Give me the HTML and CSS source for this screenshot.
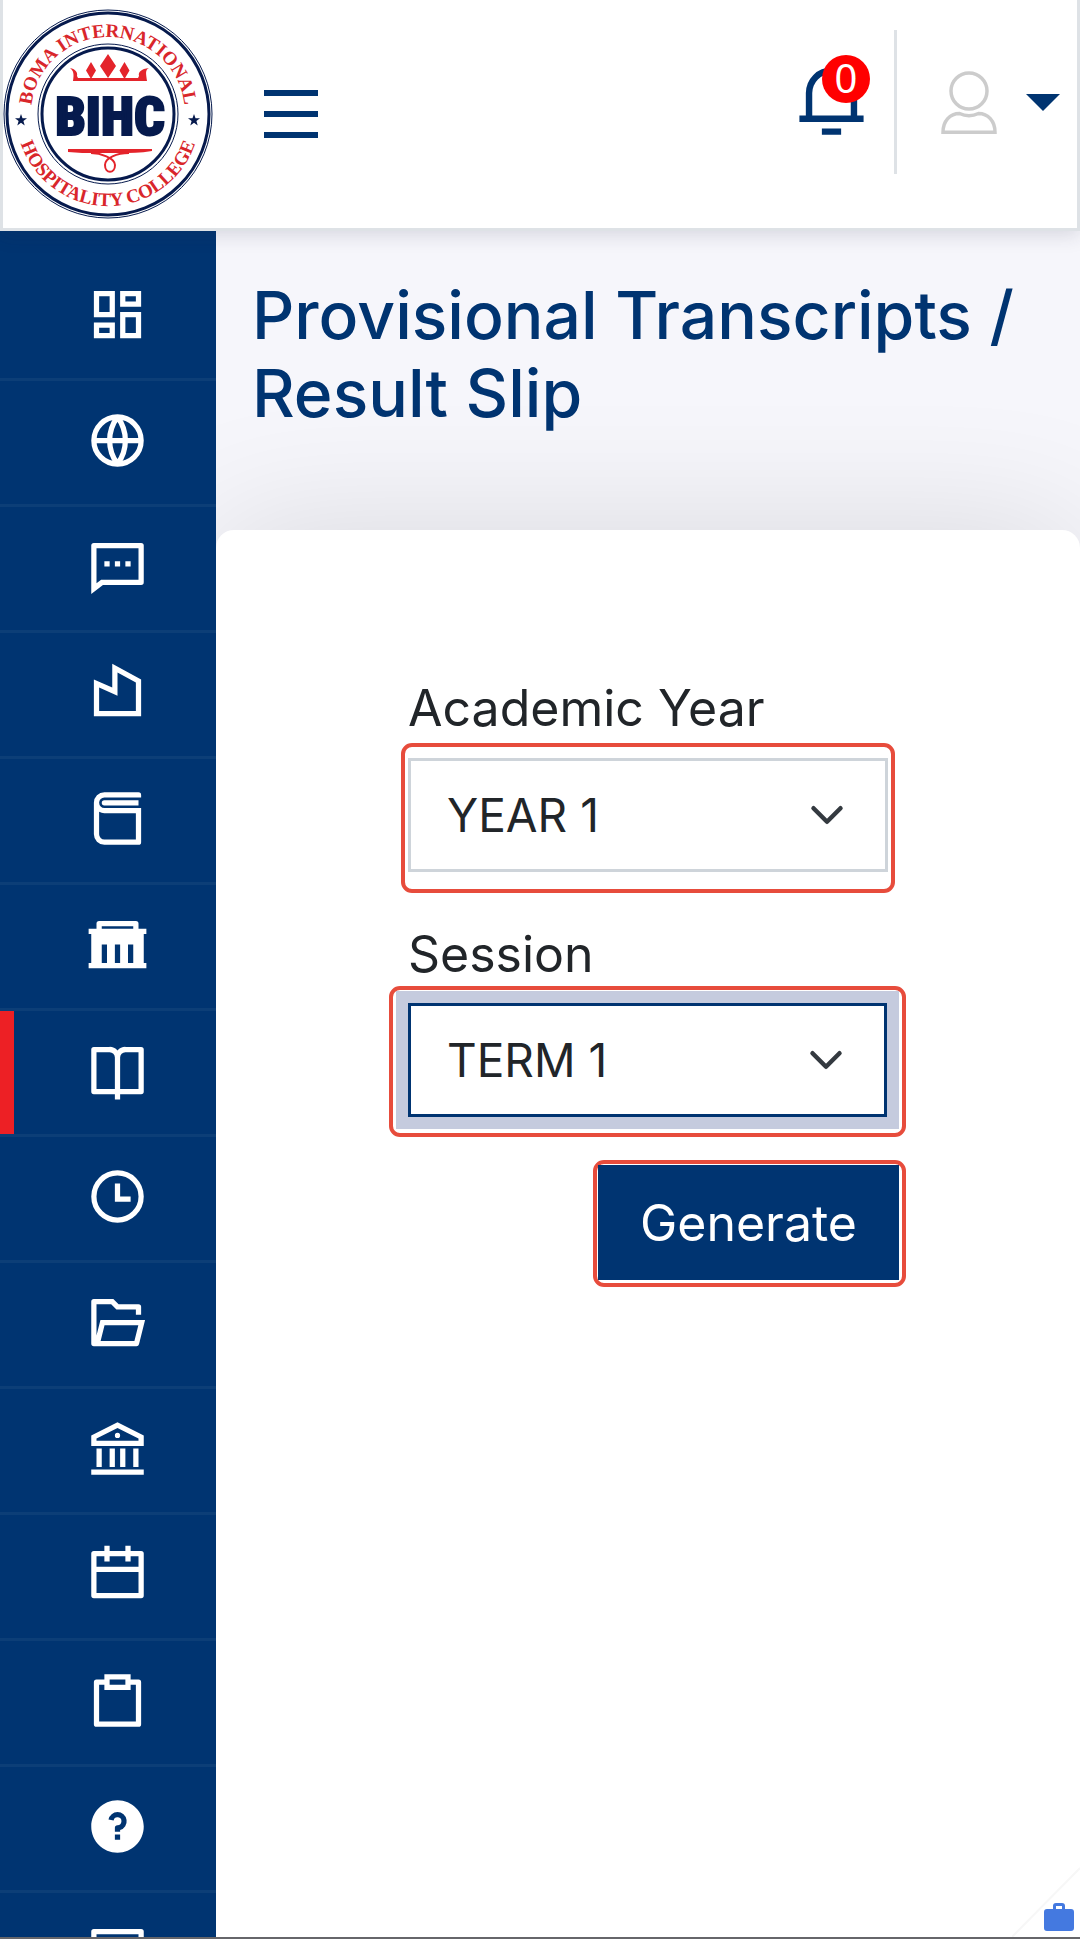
FILE: index.html
```html
<!DOCTYPE html>
<html lang="en">
<head>
    <meta charset="UTF-8">
    <meta name="viewport" content="width=device-width, initial-scale=1.0">
    <title>Provisional Transcripts / Result Slip</title>
    <link rel="stylesheet" href="styles.css">
</head>
<body>
    <!-- Top bar -->
    <header class="topbar">
        <a href="#" class="logo" aria-label="Boma International Hospitality College">
            <svg viewBox="3 0 213 228">
                <defs>
                    <path id="arcTop" d="M31 114a77 77 0 0 1 154 0"/>
                    <path id="arcBottom" d="M16 114a92 92 0 0 0 184 0"/>
                </defs>
                <g fill="none" stroke="#061a4d">
                    <circle cx="108" cy="114" r="104" stroke-width="1"/>
                    <circle cx="108" cy="114" r="101" stroke-width="3"/>
                    <circle cx="108" cy="114" r="70" stroke-width="1"/>
                    <circle cx="108" cy="114" r="66" stroke-width="3"/>
                </g>
                <g class="logo-ring">
                    <text><textPath href="#arcTop" startOffset="50%">BOMA INTERNATIONAL</textPath></text>
                    <text><textPath href="#arcBottom" startOffset="50%">HOSPITALITY COLLEGE</textPath></text>
                </g>
                <g fill="#061a4d">
                    <path d="M21 114l1.500 4.300h4.500l-3.600 2.700 1.300 4.500-3.700-2.700-3.700 2.700 1.300-4.500-3.600-2.700h4.500z"/>
                    <path d="M194 114l1.500 4.300h4.500l-3.600 2.700 1.300 4.500-3.700-2.700-3.700 2.700 1.300-4.500-3.600-2.700h4.500z"/>
                </g>
                <g fill="#e4242b">
                    <path d="M108 54l8 12-8 12-8-12zM91 62l5 8.500-5 8.500-5-8.500zM124.500 62l5 8.500-5 8.500-5-8.500z"/>
                    <path d="M70 68c5 1 8 4 7 8l1 2h60l1-2c-1-4 2-7 10-8-4 2-3 5-2 13H73c1-6 1-10-3-13z"/>
                    <path d="M68 149h84v2c-12 2-22 2-32 2H98c-12 0-20 0-30-1z"/>
                </g>
                <path d="M91 153c9 0 24 5 24 12 0 9-10 9-10 0 0-7 12-12 24-12" fill="none" stroke="#e4242b" stroke-width="2"/>
                <text class="logo-name" x="110" y="135">BIHC</text>
            </svg>
        </a>
        <button type="button" class="icon-btn menu-btn" aria-label="Toggle menu">
            <svg viewBox="0 0 24 24"><path d="M3 4h18v2H3zM3 11h18v2H3zM3 18h18v2H3z"/></svg>
        </button>
        <div class="topbar-right">
            <button type="button" class="icon-btn bell-btn" aria-label="Notifications">
                <svg viewBox="0 0 24 24"><path d="M20 17h2v2H2v-2h2v-7a8 8 0 1 1 16 0v7zm-2 0v-7a6 6 0 1 0-12 0v7h12zm-9 4h6v2H9v-2z"/></svg>
                <span class="badge">0</span>
            </button>
            <button type="button" class="icon-btn user-btn" aria-label="Account">
                <svg class="user-icon" viewBox="0 0 56 63" fill="none" stroke="#cccccc" stroke-width="3.500">
                    <circle cx="28" cy="20" r="18"/>
                    <path d="M2 61.250C2 50 9 42.500 18.500 42.500c3 1.500 6 2.300 9.500 2.300s6.500-.8 9.500-2.300C47 42.500 54 50 54 61.250z"/>
                </svg>
                <span class="caret"></span>
            </button>
        </div>
    </header>

    <div class="layout">
        <!-- Sidebar -->
        <nav class="sidebar">
            <a href="#" aria-label="Dashboard"><svg viewBox="0 0 24 24"><path d="M13 21V11h8v10h-8zM3 13V3h8v10H3zm6-2V5H5v6h4zM3 21v-6h8v6H3zm2-2h4v-2H5v2zm10 0h4v-6h-4v6zM13 3h8v6h-8V3zm2 2v2h4V5h-4z"/></svg></a>
            <a href="#" aria-label="Website"><svg viewBox="0 0 24 24"><g fill="none" stroke="#fff" stroke-width="2" stroke-linejoin="bevel"><circle cx="12" cy="12" r="9"/><path d="M3 12h18M12 3c-4 5.500-4 12.500 0 18 4-5.500 4-12.500 0-18z"/></g></svg></a>
            <a href="#" aria-label="Messages"><svg viewBox="0 0 24 24"><path d="M6.455 19L2 22.500V4a1 1 0 0 1 1-1h18a1 1 0 0 1 1 1v14a1 1 0 0 1-1 1H6.455zm-.692-2H20V5H4v13.385L5.763 17zM11 10h2v2h-2v-2zm-4 0h2v2H7v-2zm8 0h2v2h-2v-2z"/></svg></a>
            <a href="#" aria-label="Departments"><svg viewBox="0 0 24 24"><path d="M10 10.100V1l11 6v14H3V7l7 3.100zM5 19h14V8.200l-7-3.800v8.800l-7-3.100V19z"/></svg></a>
            <a href="#" aria-label="Courses"><svg viewBox="0 0 24 24"><path d="M21 4H7a2 2 0 1 0 0 4h14v13a1 1 0 0 1-1 1H7a4 4 0 0 1-4-4V6a4 4 0 0 1 4-4h13a1 1 0 0 1 1 1v1zM5 18a2 2 0 0 0 2 2h12V10H7a3.982 3.982 0 0 1-2-.535V18zM20 7H7a1 1 0 1 1 0-2h13v2z"/></svg></a>
            <a href="#" aria-label="Hostels"><svg viewBox="0 0 24 24"><path d="M20 6h3v2h-1v11h1v2H1v-2h1V8H1V6h3V4a1 1 0 0 1 1-1h14a1 1 0 0 1 1 1v2zM6 12v7h2v-7H6zm5 0v7h2v-7h-2zm5 0v7h2v-7h-2zM6 5v1h12V5H6z"/></svg></a>
            <a href="#" class="active" aria-label="Academics"><svg viewBox="0 0 24 24"><path d="M13 21v2h-2v-2H3a1 1 0 0 1-1-1V4a1 1 0 0 1 1-1h6a3.990 3.990 0 0 1 3 1.354A3.990 3.990 0 0 1 15 3h6a1 1 0 0 1 1 1v16a1 1 0 0 1-1 1h-8zm7-2V5h-5a2 2 0 0 0-2 2v12h7zm-9 0V7a2 2 0 0 0-2-2H4v14h7z"/></svg></a>
            <a href="#" aria-label="Timetable"><svg viewBox="0 0 24 24"><circle cx="12" cy="12" r="9" fill="none" stroke="#fff" stroke-width="2"/><path d="M11 7h2v5h4v2h-6z"/></svg></a>
            <a href="#" aria-label="Files"><svg viewBox="0 0 24 24"><path d="M3 21a1 1 0 0 1-1-1V4a1 1 0 0 1 1-1h7.414l2 2H20a1 1 0 0 1 1 1v3h-2V7h-7.414l-2-2H4v11.998L5.500 11h17l-2.310 9.243a1 1 0 0 1-.970.757H3zm16.938-8H7.062l-1.500 6h12.876l1.500-6z"/></svg></a>
            <a href="#" aria-label="Fees"><svg viewBox="0 0 24 24"><path d="M2 20h20v2H2v-2zm2-8h2v7H4v-7zm5 0h2v7H9v-7zm4 0h2v7h-2v-7zm5 0h2v7h-2v-7zM2 7l10-5 10 5v4H2V7zm2 1.236V9h16v-.764l-8-4-8 4zM12 8a1 1 0 1 1 0-2 1 1 0 0 1 0 2z"/></svg></a>
            <a href="#" aria-label="Calendar"><svg viewBox="0 0 24 24"><path d="M17 3h4a1 1 0 0 1 1 1v16a1 1 0 0 1-1 1H3a1 1 0 0 1-1-1V4a1 1 0 0 1 1-1h4V1h2v2h6V1h2v2zm-2 2H9v2H7V5H4v4h16V5h-3v2h-2V5zm5 6H4v8h16v-8z"/></svg></a>
            <a href="#" aria-label="Evaluation"><svg viewBox="0 0 24 24"><path d="M7 4V2h10v2h3a1 1 0 0 1 1 1v16a1 1 0 0 1-1 1H4a1 1 0 0 1-1-1V5a1 1 0 0 1 1-1h3zm0 2H5v14h14V6h-2v2H7V6zm2-2v2h6V4H9z"/></svg></a>
            <a href="#" aria-label="Help"><svg viewBox="0 0 24 24"><path d="M12 22C6.477 22 2 17.523 2 12S6.477 2 12 2s10 4.477 10 10-4.477 10-10 10zm-1-7v2h2v-2h-2zm2-1.645A3.502 3.502 0 0 0 12 6.500a3.501 3.501 0 0 0-3.433 2.813l1.962.393A1.500 1.500 0 1 1 12 11.500a1 1 0 0 0-1 1V14h2v-.645z"/></svg></a>
            <a href="#" aria-label="More"><svg viewBox="0 0 24 24"><path d="M3 3h18a1 1 0 0 1 1 1v16a1 1 0 0 1-1 1H3a1 1 0 0 1-1-1V4a1 1 0 0 1 1-1zm1 2v14h16V5H4z"/></svg></a>
        </nav>

        <!-- Page content -->
        <main class="content">
            <h1>Provisional Transcripts / Result Slip</h1>
            <section class="card">
                <form>
                    <label for="year">Academic Year</label>
                    <div class="mark mark-year">
                        <select id="year">
                            <option>YEAR 1</option>
                        </select>
                    </div>
                    <label for="session">Session</label>
                    <div class="mark mark-session">
                        <select id="session" class="focused">
                            <option>TERM 1</option>
                        </select>
                    </div>
                    <div class="mark mark-submit">
                        <button type="button" class="submit-btn">Generate</button>
                    </div>
                </form>
            </section>
        </main>
    </div>

    <!-- Corner shortcut -->
    <a href="#" class="corner" aria-label="Toolbox">
        <svg viewBox="0 0 68 70">
            <path d="M0 70L68 1" stroke="#f7f7f7" stroke-width="2"/>
            <path fill="#4479e0" fill-rule="evenodd" d="M41 42v-3a3 3 0 0 1 3-3h6a3 3 0 0 1 3 3v3h6a3 3 0 0 1 3 3v16a3 3 0 0 1-3 3H35a3 3 0 0 1-3-3V45a3 3 0 0 1 3-3zm3 0h6v-3h-6z"/>
        </svg>
    </a>
</body>
</html>
```
FILE: styles.css
```css
* {
    box-sizing: border-box;
}
body {
    display: flex;
    flex-direction: column;
    height: 100vh;
    margin: 0;
    overflow: hidden;
    border-bottom: 2px solid #66666a;
    background: #f6f6fb;
    color: #212529;
    font-family: Inter, "Open Sans", sans-serif;
    font-size: 50px;
    line-height: 64px;
}
svg {
    display: block;
}

/* Top bar */
.topbar {
    position: relative;
    z-index: 3;
    display: flex;
    align-items: center;
    flex-shrink: 0;
    background: #fff;
    border: 3px solid #dee2e6;
    border-top: 0;
    box-shadow: 0 4px 18px rgba(40, 40, 70, 0.15);
}
.logo svg {
    width: 213px;
    height: 228px;
}
.logo-ring {
    fill: #d9262b;
    font-family: "Liberation Serif", serif;
    font-size: 19px;
    font-weight: bold;
    text-anchor: middle;
}
.logo-name {
    fill: #061a4d;
    stroke: #061a4d;
    stroke-width: 2px;
    font-family: "Roboto Condensed", "Liberation Sans Narrow", Roboto, sans-serif;
    font-size: 54px;
    font-weight: 900;
    text-anchor: middle;
}
.icon-btn {
    padding: 0;
    border: 0;
    background: none;
    cursor: pointer;
    fill: #003471;
}
.menu-btn {
    margin-left: 39px;
}
.menu-btn svg {
    width: 72px;
    height: 72px;
}
.topbar-right {
    display: flex;
    align-items: center;
    margin-left: auto;
}
.bell-btn {
    position: relative;
    margin-right: 24px;
    padding-bottom: 30px;
}
.bell-btn svg {
    width: 77px;
    height: 77px;
}
.badge {
    position: absolute;
    top: -6px;
    left: 29px;
    width: 48px;
    height: 48px;
    border-radius: 50%;
    background: #f00;
    color: #fff;
    font-family: "Noto Sans", sans-serif;
    font-size: 40px;
    line-height: 46px;
    text-align: center;
}
.user-btn {
    display: flex;
    align-items: center;
    gap: 29px;
    height: 144px;
    margin-bottom: 24px;
    padding: 0 17px 0 44px;
    border-left: 3px solid #dee2e6;
}
.user-icon {
    width: 56px;
    height: 63px;
    fill: none;
}
.caret {
    border: 17px solid transparent;
    border-top-color: #003471;
    border-bottom: 0;
}

/* Sidebar */
.layout {
    display: flex;
    flex: 1;
    min-height: 0;
}
.sidebar {
    z-index: 2;
    flex-shrink: 0;
    width: 216px;
    padding-top: 24px;
    overflow: hidden;
    background: #003471;
}
.sidebar a {
    display: block;
    padding: 28px 0 32px 86px;
    border-bottom: 3px solid #0c3e77;
}
.sidebar svg {
    width: 63px;
    height: 63px;
    fill: #fff;
    fill-rule: evenodd;
}
.sidebar .active {
    box-shadow: inset 14px 0 #ed2025;
}

/* Content */
.content {
    display: flex;
    flex: 1;
    flex-direction: column;
    min-width: 0;
}
h1 {
    margin: 0;
    padding: 45px 36px 98px;
    color: #003471;
    font-size: 66px;
    font-weight: 500;
    line-height: 78px;
}
.card {
    flex: 1;
    padding: 146px 174px 0 173px;
    border-radius: 18px 18px 0 0;
    background: #fff;
    box-shadow: 0 0 140px rgba(0, 0, 0, 0.12);
}
form {
    display: flex;
    flex-direction: column;
}
label {
    margin-left: 19px;
}
.mark {
    border: 4px solid #e74c3c;
    border-radius: 11px;
}
.mark-year {
    margin: 3px 11px 29px 12px;
    padding: 11px 3px 17px;
}
.mark-session {
    margin-bottom: 23px;
    padding: 13px 15px 16px;
}
.mark-submit {
    align-self: flex-end;
    padding: 1px 3px 3px 1px;
}
select {
    display: block;
    width: 100%;
    height: 114px;
    padding: 0 100px 0 36px;
    border: 3px solid #ced4da;
    border-radius: 0;
    outline: none;
    appearance: none;
    background: #fff url("data:image/svg+xml,%3Csvg xmlns='http://www.w3.org/2000/svg' viewBox='0 0 16 16'%3E%3Cpath d='M2 5l6 6 6-6' fill='none' stroke='%23343a40' stroke-width='2' stroke-linecap='round' stroke-linejoin='round'/%3E%3C/svg%3E") no-repeat right 40px center / 36px;
    color: #212529;
    font: inherit;
    font-size: 46px;
}
select.focused {
    border-color: #003471;
    box-shadow: 0 0 0 12px #c5cbde;
}
.submit-btn {
    display: block;
    height: 115px;
    padding: 0 42px;
    border: 0;
    background: #003471;
    color: #fff;
    font: inherit;
    cursor: pointer;
}

/* Corner shortcut */
.corner {
    position: fixed;
    right: 0;
    bottom: 2px;
    z-index: 4;
}
.corner svg {
    width: 68px;
    height: 70px;
}
```
